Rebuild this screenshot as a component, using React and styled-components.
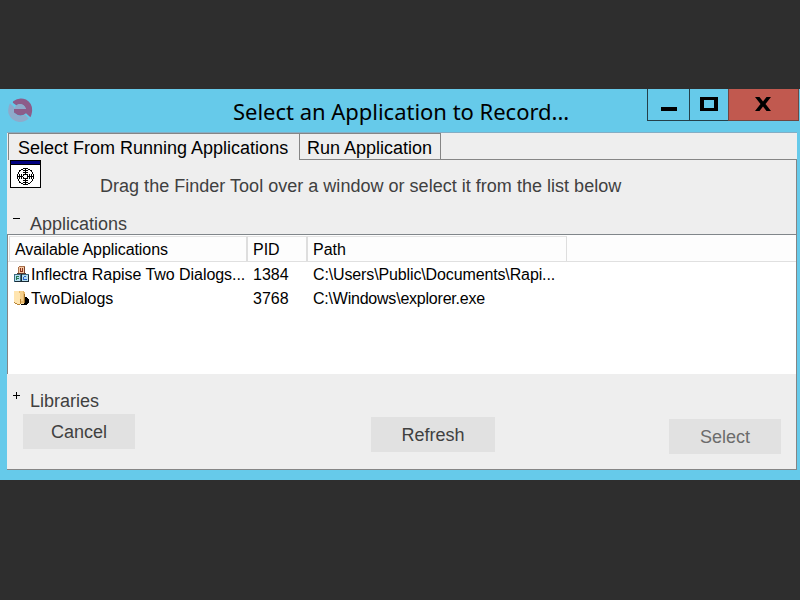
import React from "react";
import styled, { createGlobalStyle } from "styled-components";

const GlobalStyle = createGlobalStyle`
  *, *::before, *::after { box-sizing: border-box; }
  html, body { margin: 0; background: #2e2e2e; }
  body { overflow: hidden; }
`;

const Screen = styled.main`
  width: 800px;
  height: 600px;
  padding-top: 89px;
  background: #2e2e2e;
  font-family: "Liberation Sans", Arial, sans-serif;
`;

const Window = styled.section`
  width: 800px;
  height: 391px;
  background: #66caea;
  display: flex;
  flex-direction: column;
`;

const TitleBar = styled.header`
  height: 43px;
  display: flex;
  align-items: flex-start;
  padding-right: 1px;
`;

const Title = styled.h1`
  margin: 7px 0 0;
  padding-left: 200px;
  flex: 1;
  font: 400 22px/30px "Noto Sans", "Open Sans", sans-serif;
  letter-spacing: ${(p) => p.$spacing}px;
  white-space: nowrap;
  color: #000;
`;

const LogoIcon = styled.svg`
  margin: 9px 0 0 8px;
  width: 25px;
  height: 25px;
  flex: none;
`;

const CaptionButton = styled.button`
  width: ${(p) => p.$width}px;
  height: 32px;
  padding: 0;
  border: 0 solid #24404a;
  border-left-width: 1px;
  border-bottom-width: 1px;
  background: #66caea;
  display: block;
  flex: none;
  svg { display: block; }
`;

const CloseButton = styled(CaptionButton)`
  background: #c1594f;
  border-color: #6f4640;
  border-right-width: 1px;
`;

const Client = styled.div`
  margin-left: 7px;
  width: 790px;
  height: 338px;
  border-top: 1px solid #84adc4;
  background: #eee;
  display: flex;
  flex-direction: column;
`;

const Tabs = styled.nav`
  height: 27px;
  display: flex;
  padding-left: 1px;
  flex: none;
`;

const Tab = styled.button`
  width: ${(p) => p.$width}px;
  height: 27px;
  padding: ${(p) => (p.$active ? "1px 0 0 9px" : "1px 0 0 7px")};
  display: flex;
  align-items: flex-start;
  border: 1px solid #858585;
  border-right-width: ${(p) => (p.$active ? 0 : 1)}px;
  border-bottom-width: ${(p) => (p.$active ? 0 : 1)}px;
  background: #eee;
  color: #000;
  font: 400 18px/26px "Liberation Sans", Arial, sans-serif;
  text-align: left;
  white-space: nowrap;
`;

const TabRule = styled.div`
  flex: 1;
  border-bottom: 1px solid #858585;
`;

const Pane = styled.div`
  flex: 1;
  border-right: 1px solid #858585;
  border-bottom: 1px solid #858585;
  display: flex;
  flex-direction: column;
`;

const Label = styled.span`
  color: #404040;
  font-size: 18px;
  line-height: 20px;
  letter-spacing: ${(p) => p.$spacing || 0}px;
  white-space: nowrap;
`;

const FinderRow = styled.div`
  height: 54px;
  display: flex;
  padding-left: 3px;
  gap: 59px;
  svg { flex: none; }
  ${Label} { margin-top: 16px; }
`;

const GroupHeading = styled.div`
  height: ${(p) => p.$height}px;
  display: flex;
  align-items: flex-start;
  padding-left: 6px;
  gap: 10px;
  svg { flex: none; }
  ${Label} { margin-top: ${(p) => p.$labelTop || 0}px; }
`;

const ListView = styled.div`
  height: 140px;
  border-top: 1px solid #80868a;
  border-left: 1px solid #858585;
  background: #fff;
  color: #000;
  font-size: 16px;
  line-height: 20px;
  white-space: nowrap;
`;

const ListHeader = styled.div`
  height: 27px;
  padding: 1px 0 0 1px;
  display: flex;
  background: #fdfdfd;
  border-bottom: 1px solid #e0e0e0;
`;

const HeaderCell = styled.div`
  width: ${(p) => p.$width}px;
  padding: 3px 0 0 5px;
  border-top: 1px solid #e2e2e2;
  border-right: ${(p) => p.$rule}px solid #dedede;
  border-left: ${(p) => (p.$first ? 1 : 0)}px solid #dedede;
  letter-spacing: ${(p) => p.$spacing || 0}px;
`;

const Row = styled.div`
  height: 24px;
  display: grid;
  grid-template-columns: 23px 222px 60px 1fr;
  padding-top: 3px;
  svg { margin: 1px 0 0 6px; }
`;

const Cell = styled.span`
  letter-spacing: ${(p) => p.$spacing || 0}px;
`;

const Footer = styled.div`
  display: flex;
  align-items: flex-start;
  padding-left: 16px;
`;

const ActionButton = styled.button`
  width: ${(p) => p.$width}px;
  height: 35px;
  margin: ${(p) => p.$drop || 0}px 0 0 ${(p) => p.$gap || 0}px;
  padding: 1px 0 0;
  border: 0;
  background: #e1e1e1;
  color: ${(p) => (p.$muted ? "#6c6c6c" : "#404040")};
  font: 400 18px/20px "Liberation Sans", Arial, sans-serif;
`;

const Logo = () => (
  <LogoIcon viewBox="0 0 25 25">
    <path d="M2 5.2 6.3 9.2Q5 13 7.2 15.8Q12 20 17 16.6L20.6 20.5Q17 24.3 11 23.9Q3 22.6 .5 15.5Q-.6 9.5 2 5.2Z" fill="#8eaacb" />
    <path d="M5.2 3.2Q11-1.4 18 1.5Q25 5.5 24 14Q23.6 17 22.4 19.3L18 15.2Q12 20 6 14.5V11H18Q16 6.3 12 6.3Q9.7 6.3 8.6 7.6L4.8 4.8Z" fill="#8c5c8a" />
    <path d="M6 11Q8 6 12 6Q16.4 6 18 11Z" fill="#8eaacb" />
  </LogoIcon>
);

const Finder = () => (
  <svg width="31" height="28" shapeRendering="crispEdges">
    <rect width="31" height="28" fill="#000" />
    <rect x="1" y="5" width="29" height="22" fill="#fff" />
    <rect x="1" y="1" width="29" height="3" fill="#000080" />
    <circle cx="15.5" cy="16.5" r="8" fill="none" stroke="#000" />
    <circle cx="15.5" cy="16.5" r="2.5" fill="none" stroke="#000" />
    <path d="M15.5 8v6M15.5 19v6M7 16.5h6M18 16.5h6M13 10.5h5M13 12.5h5M13 20.5h5M13 22.5h5M9.5 14v5M11.5 14v5M19.5 14v5M21.5 14v5" stroke="#000" fill="none" />
  </svg>
);

const Blocks = () => (
  <svg width="16" height="17" shapeRendering="crispEdges">
    <path d="M5 0h5l1 1v7H4V1Z" fill="#a9704b" />
    <path d="M5 1h5v6H5Z" fill="#f6c9a2" />
    <path d="M10 1h1v7h-1Z" fill="#78442c" />
    <path d="M6 2h1v3h1V2h1v4H6Z" fill="#8b3420" />
    <path d="M0 8h7v8H0ZM8 8h7v8H8Z" fill="#3c6b80" />
    <path d="M1 9h5v6H1ZM8 9h6v6H8Z" fill="#b4def0" />
    <path d="M2 10h3v1H3v1h2v1H3v1H2Z" fill="#267a52" />
    <path d="M10 10h2v1h-2v2h3v1H9v-3h1Z" fill="#2961c4" />
    <path d="M7 8h1v8H7ZM14 9h1v7h-1ZM1 15h13v1H1Z" fill="#192b35" />
    <path d="M3 7h9v1H3Z" fill="#58382d" />
  </svg>
);

const Folder = () => (
  <svg width="16" height="17" shapeRendering="crispEdges">
    <path d="M10 7h2l3 3v2l-3 3H6l4-2Z" fill="#000" />
    <path d="M1 1h8l2 2v9l-2 2H3l-2-2Z" fill="#e8b86b" />
    <path d="M0 1h5l1 3v11H4l-4-2Z" fill="#ffe5b0" />
    <path d="M6 1h3v10H6Z" fill="#f4cf8b" />
    <path d="M10 4h1v9h-1Z" fill="#9b6b22" />
    <path d="M6 9h1v5H6Z" fill="#bd8535" />
    <path d="M0 12l4 2h2v1H4l-4-2Z" fill="#b78435" />
    <path d="M7 13h3v1H7Z" fill="#f9dca0" />
  </svg>
);

export default function App() {
  return (
    <Screen>
      <GlobalStyle />
      <Window>
        <TitleBar>
          <Logo />
          <Title $spacing={-0.02}>Select an Application to Record...</Title>
          <CaptionButton $width={42} aria-label="Minimize">
            <svg width="41" height="31"><path d="M13 18h16v4H13z" /></svg>
          </CaptionButton>
          <CaptionButton $width={39} aria-label="Maximize">
            <svg width="38" height="31"><path fillRule="evenodd" d="M10 8h18v14H10zM14 11v8h10v-8z" /></svg>
          </CaptionButton>
          <CloseButton $width={71} aria-label="Close">
            <svg width="69" height="31"><path d="M26 8h4.5l3.5 4.5L37.500 8h4.500l-5.500 7 5.500 7h-4.500L34 17.500 30.500 22H26l5.500-7z" /></svg>
          </CloseButton>
        </TitleBar>
        <Client>
          <Tabs>
            <Tab $active $width={291}>Select From Running Applications</Tab>
            <Tab $width={142}>Run Application</Tab>
            <TabRule />
          </Tabs>
          <Pane>
            <FinderRow>
              <Finder />
              <Label $spacing={0.02}>Drag the Finder Tool over a window or select it from the list below</Label>
            </FinderRow>
            <GroupHeading $height={20}>
              <svg width="7" height="9"><path d="M0 4h7v1H0z" /></svg>
              <Label>Applications</Label>
            </GroupHeading>
            <ListView>
              <ListHeader>
                <HeaderCell $first $width={239} $rule={2} $spacing={-0.07}>Available Applications</HeaderCell>
                <HeaderCell $width={60} $rule={2}>PID</HeaderCell>
                <HeaderCell $width={259} $rule={1}>Path</HeaderCell>
              </ListHeader>
              <Row>
                <Blocks />
                <Cell $spacing={-0.05}>Inflectra Rapise Two Dialogs...</Cell>
                <Cell>1384</Cell>
                <Cell $spacing={-0.13}>C:\Users\Public\Documents\Rapi...</Cell>
              </Row>
              <Row>
                <Folder />
                <Cell $spacing={-0.05}>TwoDialogs</Cell>
                <Cell>3768</Cell>
                <Cell $spacing={-0.22}>C:\Windows\explorer.exe</Cell>
              </Row>
            </ListView>
            <GroupHeading $height={40} $labelTop={17}>
              <svg width="7" height="40"><path d="M0 21h7v1H0zM3 18h1v7H3z" /></svg>
              <Label>Libraries</Label>
            </GroupHeading>
            <Footer>
              <ActionButton $width={112}>Cancel</ActionButton>
              <ActionButton $width={124} $gap={236} $drop={3}>Refresh</ActionButton>
              <ActionButton $width={112} $gap={174} $drop={5} $muted>Select</ActionButton>
            </Footer>
          </Pane>
        </Client>
      </Window>
    </Screen>
  );
}
